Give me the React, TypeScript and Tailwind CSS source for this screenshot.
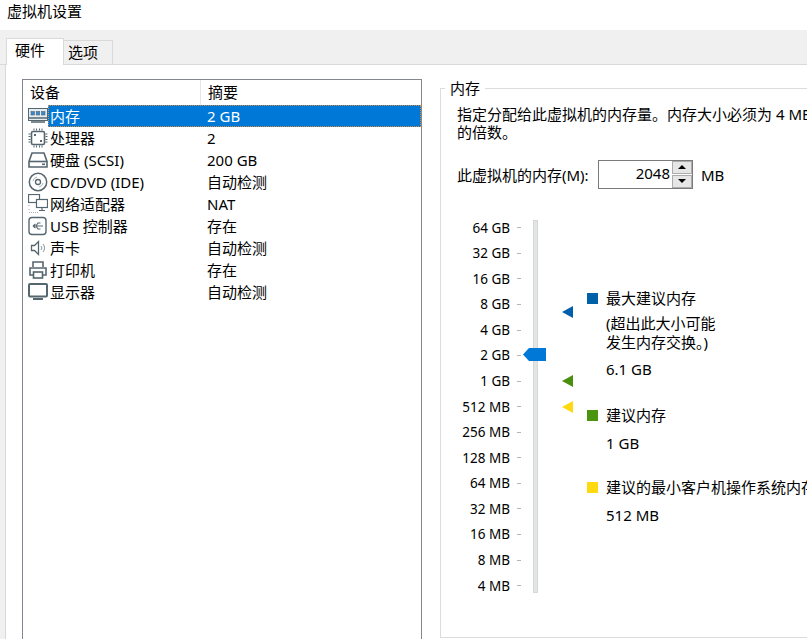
import React from "react";

const iconColor = "#56666f";

// device icons, drawn on a 20x20 box
function RamIcon() {
  return (
    <svg width="20" height="16" viewBox="0 0 20 16" fill="none" stroke={iconColor}>
      <rect x="0.5" y="0.5" width="19" height="12" fill="#e4edf3" />
      <rect x="3" y="3.5" width="3.5" height="3.5" fill="#3a8ad0" strokeWidth="0.6" />
      <rect x="8.2" y="3.5" width="3.5" height="3.5" fill="#3a8ad0" strokeWidth="0.6" />
      <rect x="13.5" y="3.5" width="3.5" height="3.5" fill="#3a8ad0" strokeWidth="0.6" />
      <path d="M1 10h18M3 14h14" strokeWidth="1.6" />
    </svg>
  );
}
function CpuIcon() {
  return (
    <svg width="20" height="20" viewBox="0 0 20 20" fill="none" stroke={iconColor}>
      <rect x="3.5" y="3.5" width="13" height="13" rx="1.5" strokeWidth="1.6" />
      <path d="M6 0.5v2M8.5 0.5v2M11.5 0.5v2M14 0.5v2M6 17.5v2M8.5 17.5v2M11.5 17.5v2M14 17.5v2M0.5 6h2M0.5 8.5h2M0.5 11.5h2M0.5 14h2M17.5 6h2M17.5 8.5h2M17.5 11.5h2M17.5 14h2" />
      <rect x="6" y="6" width="2" height="2" fill={iconColor} stroke="none" />
      <rect x="12" y="12" width="2" height="2" fill={iconColor} stroke="none" />
    </svg>
  );
}
function DiskIcon() {
  return (
    <svg width="20" height="16" viewBox="0 0 20 16" fill="none" stroke={iconColor} strokeWidth="1.6">
      <path d="M4 1h12l3 8.5V15H1V9.5z" />
      <path d="M1 9.5h18" />
      <path d="M14 12.3h3" />
    </svg>
  );
}
function CdIcon() {
  return (
    <svg width="20" height="20" viewBox="0 0 20 20" fill="none" stroke={iconColor}>
      <circle cx="10" cy="10" r="8.7" strokeWidth="1.5" />
      <circle cx="10" cy="10" r="2.5" strokeWidth="1.3" />
      <path d="M5 9a5 5 0 0 1 4-4M15 11a5 5 0 0 1-4 4" stroke="#a9b3b9" />
    </svg>
  );
}
function NetIcon() {
  return (
    <svg width="20" height="20" viewBox="0 0 20 20" fill="none" stroke={iconColor} strokeWidth="1.2">
      <rect x="0.5" y="0.5" width="11" height="8" />
      <rect x="8.5" y="5.5" width="11" height="8" fill="#fff" />
      <path d="M14 14v2M11 16.5h6" />
      <path d="M1 11v2M1 15v1M1 18.5h10" stroke="#a9b3b9" strokeDasharray="1 1" />
    </svg>
  );
}
function UsbIcon() {
  return (
    <svg width="20" height="20" viewBox="0 0 20 20" fill="none" stroke={iconColor}>
      <rect x="1" y="1.5" width="17" height="17" rx="3" strokeWidth="1.4" />
      <path d="M5 10h10M5 10l2.5-2M5 10l2.5 2M8 10l2-3h2.5M8 10l2 3h2.5" strokeWidth="1.1" />
    </svg>
  );
}
function SoundIcon() {
  return (
    <svg width="20" height="18" viewBox="0 0 20 18" fill="none" stroke={iconColor}>
      <path d="M3.5 6.5h3l4-4v13l-4-4h-3z" strokeWidth="1.3" />
      <path d="M13 7a3 3 0 0 1 0 4M15 5a6 6 0 0 1 0 8" stroke="#8a979e" />
    </svg>
  );
}
function PrinterIcon() {
  return (
    <svg width="20" height="20" viewBox="0 0 20 20" fill="none" stroke={iconColor} strokeWidth="1.6">
      <path d="M5 7V2h10v5" />
      <path d="M5 15H2V8h16v7h-3" />
      <rect x="5.5" y="12" width="9" height="6" />
    </svg>
  );
}
function MonitorIcon() {
  return (
    <svg width="20" height="18" viewBox="0 0 20 18" fill="none" stroke={iconColor}>
      <rect x="1" y="1" width="18" height="12.5" rx="1" strokeWidth="2" />
      <path d="M5 16h10" strokeWidth="2" />
    </svg>
  );
}

const devices = [
  { name: "内存", summary: "2 GB", Icon: RamIcon, selected: true },
  { name: "处理器", summary: "2", Icon: CpuIcon },
  { name: "硬盘 (SCSI)", summary: "200 GB", Icon: DiskIcon },
  { name: "CD/DVD (IDE)", summary: "自动检测", Icon: CdIcon },
  { name: "网络适配器", summary: "NAT", Icon: NetIcon },
  { name: "USB 控制器", summary: "存在", Icon: UsbIcon },
  { name: "声卡", summary: "自动检测", Icon: SoundIcon },
  { name: "打印机", summary: "存在", Icon: PrinterIcon },
  { name: "显示器", summary: "自动检测", Icon: MonitorIcon },
];

const sizes = [
  "64 GB", "32 GB", "16 GB", "8 GB", "4 GB", "2 GB", "1 GB", "512 MB",
  "256 MB", "128 MB", "64 MB", "32 MB", "16 MB", "8 MB", "4 MB",
];

function DeviceList() {
  return (
    <div className="w-[400px] h-[600px] shrink-0 border border-[#828790] bg-white">
      <div className="flex h-[25px]">
        <div className="w-[178px] pl-[7px] border-r border-[#e5e5e5] leading-[25px]">设备</div>
        <div className="pl-[7px] leading-[25px]">摘要</div>
      </div>
      {devices.map(({ name, summary, Icon, selected }) => (
        <div key={name} className="flex h-[22px] items-center">
          <div className="w-[25px] shrink-0 pl-[5px] flex items-center">
            <Icon />
          </div>
          {selected ? (
            <div className="flex flex-1 h-[22px] items-center bg-[#0078d7] text-white border border-dotted border-[#e08a3c]">
              <div className="w-[158px] pl-[1px]">{name}</div>
              <div>{summary}</div>
            </div>
          ) : (
            <>
              <div className="w-[159px] pl-[2px]">{name}</div>
              <div>{summary}</div>
            </>
          )}
        </div>
      ))}
    </div>
  );
}

function MemorySlider() {
  return (
    <div className="flex w-[97px] shrink-0">
      <div className="w-[80px] shrink-0 pt-[1px] text-[13.5px]">
        {sizes.map((size) => (
          <div key={size} className="flex h-[25.57px] items-center justify-end whitespace-nowrap">
            {size}
            <span className="ml-[7px] w-[4px] h-px bg-[#b5b5b5]" />
          </div>
        ))}
      </div>
      <div className="relative shrink-0 w-[5px] h-[373px] ml-[12px] mt-[6px] bg-[#e3e5e5] border border-[#d6d8d8]">
        {/* current value handle */}
        <svg className="absolute left-[-11px] top-[127px]" width="23" height="13" viewBox="0 0 23 13">
          <path d="M0 6.5 6 0h17v13H6z" fill="#0078d7" />
        </svg>
        {/* recommended markers */}
        <svg className="absolute left-[28px] top-[85px]" width="11" height="12" viewBox="0 0 11 12">
          <path d="M0 6 11 0v12z" fill="#005fa8" />
        </svg>
        <svg className="absolute left-[28px] top-[154px]" width="11" height="12" viewBox="0 0 11 12">
          <path d="M0 6 11 0v12z" fill="#4a8f10" />
        </svg>
        <svg className="absolute left-[28px] top-[180px]" width="11" height="12" viewBox="0 0 11 12">
          <path d="M0 6 11 0v12z" fill="#ffd90f" />
        </svg>
      </div>
    </div>
  );
}

function Legend() {
  return (
    <div className="ml-[49px] pt-[73px] whitespace-nowrap">
      <div className="flex items-center h-[22px]">
        <span className="w-[11px] h-[11px] bg-[#0060a8] mr-[8px]" />
        最大建议内存
      </div>
      <div className="ml-[19px] mt-[5px] leading-[19px]">
        (超出此大小可能
        <br />
        发生内存交换。)
      </div>
      <div className="ml-[19px] mt-[6px] h-[22px] leading-[22px]">6.1 GB</div>
      <div className="flex items-center h-[22px] mt-[24px]">
        <span className="w-[11px] h-[11px] bg-[#4a9410] mr-[8px]" />
        建议内存
      </div>
      <div className="ml-[19px] mt-[6px] h-[22px] leading-[22px]">1 GB</div>
      <div className="flex items-center h-[22px] mt-[22px]">
        <span className="w-[11px] h-[11px] bg-[#ffd90f] mr-[8px]" />
        建议的最小客户机操作系统内存
      </div>
      <div className="ml-[19px] mt-[6px] h-[22px] leading-[22px]">512 MB</div>
    </div>
  );
}

function MemoryGroup() {
  return (
    <div className="relative w-[420px] h-[550px] shrink-0 ml-[18px] mt-[9px] border border-[#dcdcdc]">
      <div className="absolute left-[4px] top-[-11px] bg-white px-[5px] leading-[20px]">内存</div>
      <div className="pl-[16px] pt-[17px] leading-[17.5px] whitespace-nowrap">
        指定分配给此虚拟机的内存量。内存大小必须为 4 MB
        <br />
        的倍数。
      </div>
      <div className="flex items-center pl-[16px] mt-[19px] h-[28px] whitespace-nowrap">
        <span className="w-[141px] pt-[2px]">此虚拟机的内存(M):</span>
        <div className="flex w-[95px] h-[29px] border border-[#7a7a7a]">
          <div className="flex-1 text-right pr-[2px] leading-[24px]">2048</div>
          <div className="w-[20px] flex flex-col gap-px bg-white">
            <div className="flex-1 bg-[#e6e6e6] border border-[#acacac] flex items-center justify-center">
              <span className="w-0 h-0 border-x-[4px] border-x-transparent border-b-[4px] border-b-black" />
            </div>
            <div className="flex-1 bg-[#e6e6e6] border border-[#acacac] flex items-center justify-center">
              <span className="w-0 h-0 border-x-[4px] border-x-transparent border-t-[4px] border-t-black" />
            </div>
          </div>
        </div>
        <span className="ml-[8px] pt-[2px]">MB</span>
      </div>
      <div className="flex mt-[26px]">
        <MemorySlider />
        <Legend />
      </div>
    </div>
  );
}

export default function App() {
  return (
    <div className="w-[807px] h-[639px] overflow-hidden bg-white text-[15px] text-black font-['Noto_Sans','Noto_Sans_CJK_SC',sans-serif]">
      <div className="h-[30px] pl-[7px] leading-[22px]">虚拟机设置</div>
      <div className="flex items-end h-[35px] pl-[6px] bg-[#f0f0f0] border-b border-[#d9d9d9]">
        <div className="relative top-px w-[58px] h-[27px] pl-[8px] bg-white border border-b-0 border-[#d9d9d9] leading-[22px]">硬件</div>
        <div className="w-[50px] h-[24px] -ml-px pl-[4px] border border-b-0 border-[#d9d9d9] leading-[22px]">选项</div>
      </div>
      <div className="flex h-[574px]">
        <div className="w-[6px] shrink-0 bg-[#f0f0f0] border-r border-[#d9d9d9]" />
        <div className="flex pl-[16px] pt-[14px]">
          <DeviceList />
          <MemoryGroup />
        </div>
      </div>
    </div>
  );
}
